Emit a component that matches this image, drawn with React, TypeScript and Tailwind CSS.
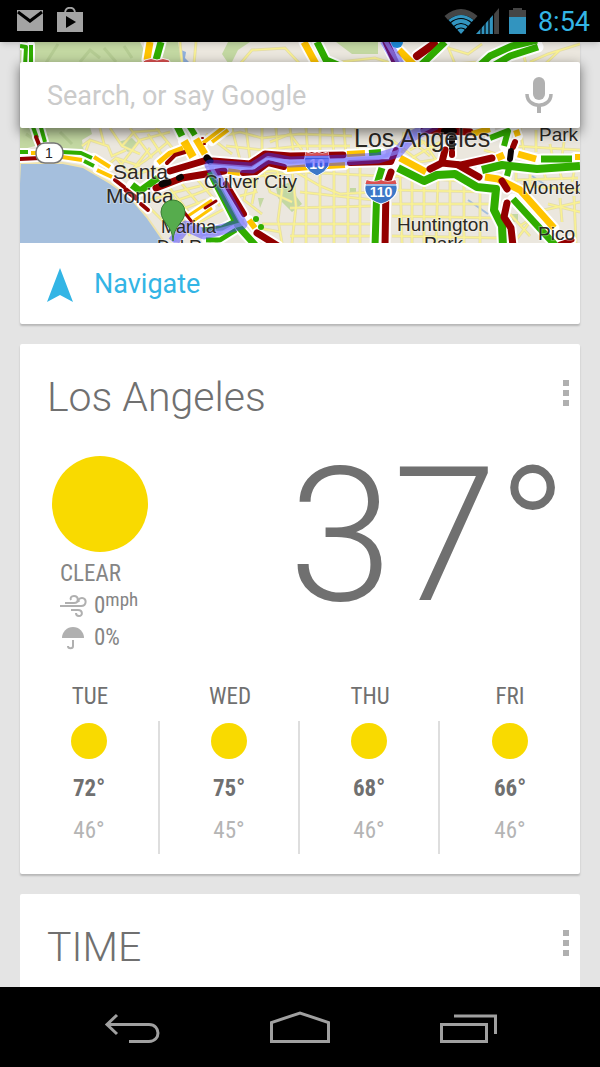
import React from 'react';

interface Road {
  d: string;
  color: string;
  width?: number;
}

interface Forecast {
  day: string;
  high: number;
  low: number;
}

const GREEN = '#30ad00';
const YELLOW = '#ffc400';
const RED = '#930000';
const BLACK = '#0c0404';

const FORECAST: Forecast[] = [
  { day: 'TUE', high: 72, low: 46 },
  { day: 'WED', high: 75, low: 45 },
  { day: 'THU', high: 68, low: 46 },
  { day: 'FRI', high: 66, low: 46 },
];

const STREETS = [
  // top strip
  'M180 42 L182 64 M196 42 L194 64 M240 64 L252 50 L285 48 L300 64 M340 62 L375 58 L400 66',
  'M446 42 L455 64 M448 48 L468 54 L482 44 M455 64 L478 62 M530 62 L548 54 L580 44 M545 64 L560 50 M520 42 L526 64',
  // santa monica
  'M82 146 L90 140 L108 146 L112 156 L126 150 M90 140 L84 156 M100 128 L104 144 M110 128 L122 146 L140 154',
  'M122 146 L134 132 L160 130 M104 168 L116 158 L140 166 M130 128 L152 158 M116 158 L128 172 L146 160 L168 142',
  'M140 140 L170 132 M148 134 L164 158 M136 174 L158 168 M120 166 L140 140 M156 128 L174 150 M126 178 L150 148',
  'M150 200 L176 192 L200 186 M168 186 L190 214 M182 184 L202 208 M196 178 L220 206 M150 208 L172 230',
  'M166 204 L196 194 L222 184 M180 210 L206 200 M200 222 L226 208 M222 200 L238 232 M172 196 L190 236',
  // mid city
  'M214 138 L240 132 L262 138 L300 134 L352 136 M226 146 L262 150 L300 146 L350 146 M206 134 L232 154',
  'M232 128 L240 160 M246 128 L250 160 M262 128 L262 152 M276 128 L278 156 M290 128 L294 156',
  'M306 128 L308 156 M320 128 L320 156 M332 128 L334 156 M344 128 L346 156 M356 128 L358 156',
  'M270 142 L290 134 L302 150 M300 156 L288 170 L262 172 M224 174 L260 176 L300 172 L380 176',
  'M296 172 L320 186 L340 194 L375 192 M276 166 L282 190 L278 220 L282 243 M292 170 L296 206 L292 243 M306 168 L306 243',
  'M320 172 L320 243 M334 166 L334 243 M348 166 L348 243 M360 166 L360 243 M250 172 L244 200 L262 214',
  'M258 172 L252 204 M262 166 L270 192 L292 202 M290 208 L374 206 M262 224 L374 224 M290 236 L374 236',
  'M248 226 L280 232 M300 192 L374 200 M240 196 L256 192 L250 176',
  // south los angeles
  'M394 176 L580 190 M392 190 L492 192 M392 204 L492 204 M392 216 L496 218 M392 236 L500 238',
  'M400 172 L402 243 M412 180 L412 243 M424 186 L424 243 M438 180 L436 243 M450 178 L450 243 M464 184 L464 243 M480 190 L480 243',
  'M392 140 L420 162 L446 158 M410 150 L424 142 L436 160 M404 132 L400 158 M416 144 L430 156 M420 140 L436 150 M412 158 L440 142',
  // east side
  'M520 128 L524 152 M536 130 L536 152 M550 144 L552 154 M564 142 L562 156 M514 146 L580 150 M484 150 L508 158',
  'M516 172 L516 194 M530 172 L530 202 M544 172 L546 180 M560 172 L562 180 M574 172 L572 182 M516 180 L578 178',
  'M520 226 L544 210 L580 202 M510 214 L530 236 M548 204 L580 212 M560 198 L562 222 M516 240 L536 214 M574 196 L576 243',
];

const ROADS: Road[] = [
  // strip above the search box
  { d: 'M20 46 L26 47 L25 66', color: GREEN, width: 4 },
  { d: 'M31 45 L31 66', color: GREEN, width: 4 },
  { d: 'M150 42 L147 60', color: YELLOW, width: 7 },
  { d: 'M161 42 L156 60', color: GREEN, width: 7 },
  { d: 'M304 42 L317 66', color: YELLOW, width: 7 },
  { d: 'M317 42 L326 60 L340 66', color: GREEN, width: 7 },
  { d: 'M386 42 L398 68', color: RED, width: 7 },
  { d: 'M399 50 L417 68', color: YELLOW, width: 7 },
  { d: 'M417 56 L434 44', color: RED, width: 8 },
  { d: 'M420 66 L445 42', color: GREEN, width: 7 },
  { d: 'M479 66 L490 56 L512 46 L537 40', color: GREEN, width: 7 },
  { d: 'M493 66 L510 56 L538 47', color: GREEN, width: 7 },
  // pacific coast highway
  { d: 'M32 124 L37 138', color: GREEN, width: 4 },
  { d: 'M40 124 L45 142', color: GREEN, width: 4 },
  { d: 'M36 137 L40 147', color: RED, width: 4 },
  { d: 'M20 152 L28 152', color: GREEN, width: 4 },
  { d: 'M31 153 L38 153', color: YELLOW, width: 4 },
  { d: 'M20 159 L40 158', color: RED, width: 4 },
  { d: 'M62 152 L81 153 L92 158', color: GREEN, width: 4 },
  { d: 'M62 157 L82 160', color: YELLOW, width: 4 },
  { d: 'M84 161 L94 166', color: GREEN, width: 4 },
  { d: 'M94 157 L110 167', color: YELLOW, width: 4 },
  { d: 'M97 170 L112 177', color: YELLOW, width: 4 },
  { d: 'M115 180 L124 187', color: RED, width: 4 },
  { d: 'M126 190 L136 198', color: RED, width: 5 },
  { d: 'M141 204 L148 210', color: RED, width: 4 },
  // santa monica freeway
  { d: 'M158 163 L170 153 L183 148', color: YELLOW, width: 5 },
  { d: 'M167 163 L175 155 L185 152', color: RED, width: 4 },
  { d: 'M176 124 L182 136', color: GREEN, width: 7 },
  { d: 'M188 124 L195 135', color: GREEN, width: 6 },
  { d: 'M184 141 L193 157', color: YELLOW, width: 8 },
  { d: 'M196 139 L205 154', color: YELLOW, width: 7 },
  { d: 'M203 143 L224 127', color: YELLOW, width: 4 },
  { d: 'M212 142 L228 130', color: YELLOW, width: 4 },
  { d: 'M170 171 L207 160', color: RED, width: 7 },
  { d: 'M156 188 L182 178 L224 171', color: RED, width: 7 },
  { d: 'M132 185 L140 191 L158 178', color: GREEN, width: 7 },
  { d: 'M162 184 L168 182', color: BLACK, width: 7 },
  { d: 'M179 178 L181 177', color: BLACK, width: 6 },
  { d: 'M228 171 L240 173', color: YELLOW, width: 6 },
  { d: 'M213 161 L250 164 L265 154 L290 156 L343 155', color: RED, width: 7 },
  { d: 'M243 173 L256 172 L268 163 L284 167', color: RED, width: 6 },
  { d: 'M287 169 L310 167 L345 165', color: YELLOW, width: 6 },
  { d: 'M347 154 L365 153', color: YELLOW, width: 6 },
  { d: 'M369 153 L381 152', color: GREEN, width: 6 },
  { d: 'M350 163 L391 162 L396 150', color: RED, width: 6 },
  { d: 'M207 158 L210 161', color: BLACK, width: 7 },
  { d: 'M202 138 L203 138 M204 144 L205 144', color: RED, width: 2 },
  // san diego freeway
  { d: 'M210 172 L238 226 L256 246', color: GREEN, width: 7 },
  { d: 'M237 220 L222 228 L202 230', color: GREEN, width: 5 },
  { d: 'M236 230 L220 240 L206 240', color: GREEN, width: 5 },
  { d: 'M226 184 L244 214', color: RED, width: 6 },
  { d: 'M249 220 L255 228', color: YELLOW, width: 6 },
  { d: 'M257 233 L278 246', color: RED, width: 7 },
  { d: 'M188 216 L212 200', color: YELLOW, width: 3 },
  { d: 'M192 222 L212 208', color: YELLOW, width: 3 },
  { d: 'M205 208 L216 201', color: RED, width: 3 },
  { d: 'M184 212 L192 222', color: RED, width: 3 },
  // harbor freeway
  { d: 'M382 168 L377 184 L375 246', color: GREEN, width: 7 },
  { d: 'M391 172 L386 186 L385 246', color: RED, width: 7 },
  // east
  { d: 'M400 158 L426 172', color: YELLOW, width: 7 },
  { d: 'M398 168 L424 181 L437 175 L455 174 L477 187 L496 189 L494 210 L502 226 L503 246', color: GREEN, width: 8 },
  { d: 'M482 170 L502 165 L537 169 L580 166', color: GREEN, width: 8 },
  { d: 'M490 138 L508 131 L504 146', color: GREEN, width: 6 },
  { d: 'M510 164 L507 176', color: GREEN, width: 6 },
  { d: 'M430 169 L442 163 L461 165 L492 158', color: RED, width: 7 },
  { d: 'M445 150 L442 162 M458 165 L479 177', color: RED, width: 7 },
  { d: 'M424 130 L448 131 L470 132', color: RED, width: 7 },
  { d: 'M472 134 L490 129', color: YELLOW, width: 6 },
  { d: 'M444 131 L454 131 M452 138 L452 148', color: BLACK, width: 6 },
  { d: 'M452 152 L452 155', color: RED, width: 6 },
  { d: 'M497 158 L504 155', color: YELLOW, width: 7 },
  { d: 'M518 154 L536 159', color: YELLOW, width: 7 },
  { d: 'M541 159 L572 159', color: GREEN, width: 7 },
  { d: 'M575 157 L582 157', color: YELLOW, width: 6 },
  { d: 'M516 130 L518 136', color: YELLOW, width: 6 },
  { d: 'M515 142 L513 147', color: RED, width: 6 },
  { d: 'M511 151 L510 159', color: BLACK, width: 6 },
  { d: 'M485 177 L498 179 L520 190 L554 228', color: YELLOW, width: 7 },
  { d: 'M513 199 L556 246', color: GREEN, width: 7 },
  { d: 'M502 181 L507 189', color: RED, width: 7 },
  { d: 'M507 203 L504 217 L511 228 L513 246', color: RED, width: 7 },
  { d: 'M560 244 L572 240', color: RED, width: 5 },
];

const ROUTE =
  'M385 40 L400 66 M436 124 L412 136 L398 152 L378 158 L345 160 L290 162 L268 158 L252 168 L210 165 L242 224 L220 230 L204 234 L186 226 L173 242';

const StatusBar: React.FC = () => (
  <header className="relative z-20 flex h-[42px] shrink-0 items-center justify-between bg-black pr-[10px] pl-4 shadow-md">
    <div className="flex items-center gap-3">
      <svg width="28" height="28" viewBox="0 0 28 28" aria-label="New mail">
        <path d="M1 3h26v21H1z" fill="#a3a3a3" />
        <path d="M2 5l12 9 12-9" fill="none" stroke="#000" strokeWidth="3" />
      </svg>
      <svg width="28" height="28" viewBox="0 0 28 28" aria-label="Play store">
        <path d="M1 5h26v20H1z" fill="#a3a3a3" />
        <path d="M9 6c0-7 10-7 10 0" fill="none" stroke="#a3a3a3" strokeWidth="2" />
        <path d="M10 9v12l10-6z" fill="#000" />
      </svg>
    </div>
    <div className="flex items-center">
      <svg width="84" height="28" viewBox="445 7 84 28" aria-label="Wi-Fi, signal and battery">
        <path d="M445.500 16 Q462 2 478.500 16 L475 20 Q462 10 449 20 Z" fill="#454545" />
        <path d="M449.500 20 Q462 10 474.500 20 L462 34 Z" fill="#3294bf" />
        <path
          d="M451 23 Q462 14 473 23 M454 27 Q462 20 470 27 M457 30 Q462 26 467 30"
          fill="none"
          stroke="#000"
          strokeWidth="1.200"
        />
        <path d="M477 34 L494 15 L494 34 Z" fill="#3294bf" />
        <path d="M495 14 L500 8 L500 34 L495 34 Z" fill="#454545" />
        <path d="M482 24v10 M486 20v14 M490 16v18 M494.500 12v22" stroke="#000" strokeWidth="1.200" />
        <path d="M510 17 V10 H514 V8 H523 V10 H527 V17 Z" fill="#454545" />
        <path d="M510 17 H527 V34 H510 Z" fill="#3294bf" />
      </svg>
      <time className="ml-2.5 pt-0.5 text-[27px] leading-8 text-[#33b5e5]">8:54</time>
    </div>
  </header>
);

const Interstate: React.FC<{ x: number; y: number; label: string; wide?: boolean }> = ({ x, y, label, wide }) => (
  <g transform={`translate(${x} ${y})`}>
    <g transform={wide ? 'scale(1.3 1)' : undefined}>
      <path d="M-11 -11 Q-5 -8 0 -11 Q5 -8 11 -11 Q17 6 0 13 Q-17 6 -11 -11Z" fill="#3c78c8" stroke="#fff" />
      <path d="M-11 -11 Q-5 -8 0 -11 Q5 -8 11 -11 L12 -7 H-12Z" fill="#d95050" />
      <path d="M-12 -6H12" stroke="#fff" />
    </g>
    <text y="6" textAnchor="middle" fontSize="14" fontWeight="700" fill="#fff">
      {label}
    </text>
  </g>
);

const TrafficMap: React.FC = () => (
  <svg
    className="block aspect-[560/201] w-full"
    viewBox="20 42 560 201"
    preserveAspectRatio="xMidYMid slice"
    fontFamily="'Liberation Sans', sans-serif"
    role="img"
    aria-label="Traffic map of Los Angeles"
  >
    <rect x="20" y="42" width="560" height="201" fill="#ebe7de" />
    {/* parks and hills */}
    <g fill="#c3d8a2">
      <path d="M20 42 H140 L146 54 L166 66 V84 H20Z" />
      <path d="M20 120 H88 L92 134 L82 140 L84 152 L60 150 L50 142 L20 150Z" />
      <path d="M160 42 H178 L182 64 H158Z M228 42 H250 L238 50 L230 66 L222 54Z M336 42 H378 V54 H352Z" />
      <path d="M276 188 L290 182 L296 196 L302 204 L292 212 L278 198Z M258 198 L264 198 L260 208Z" />
      <path d="M118 142 L132 138 L138 144 L128 152Z M512 214 h6 v8 h-6Z M350 188 h6 v6 h-6Z" />
    </g>
    <path
      d="M44 66 L58 44 M80 62 L90 50 L100 58 M104 48 L116 62 M124 46 L132 58 M26 134 L40 144 L48 134 M60 132 L72 144"
      stroke="#b5cc93"
      strokeWidth="3"
      fill="none"
    />
    <path d="M181 50 L186 52 L185 58 L189 62 L185 66 L180 64Z" fill="#8fb0dc" />
    <path d="M468 200 L488 214 M532 176 L544 184" stroke="#a5bfdd" strokeWidth="2" />

    {STREETS.map(d => (
      <path key={d} d={d} fill="none" stroke="#e3dcaa" strokeWidth="3" />
    ))}
    {STREETS.map(d => (
      <path key={d} d={d} fill="none" stroke="#faf291" strokeWidth="1.500" />
    ))}

    {/* ocean */}
    <path
      d="M20 163 L63 163 L83 167 L110 183 L130 197 L147 217 L163 240 L166 246 H16Z"
      fill="#a5bfdd"
      stroke="#efe3ae"
      strokeWidth="2"
    />

    {/* traffic, white casing first */}
    <g fill="none" strokeLinejoin="round">
      {ROADS.map(r => (
        <path key={r.d} d={r.d} stroke="#fff" strokeWidth={(r.width ?? 6) + 4} strokeLinecap="round" />
      ))}
      {ROADS.map(r => (
        <path
          key={r.d}
          d={r.d}
          stroke={r.color}
          strokeWidth={r.width ?? 6}
          strokeLinecap={r.color === RED || r.color === BLACK ? 'round' : 'butt'}
        />
      ))}
      <circle cx="256" cy="219" r="3" fill={GREEN} />
      <circle cx="261" cy="227" r="3" fill={GREEN} />
    </g>

    <Interstate x={317} y={163} label="10" />

    {/* planned route */}
    <g fill="none" strokeLinejoin="round">
      <path d={ROUTE} stroke="#3a30ff" strokeOpacity="0.45" strokeWidth="11" />
      <path d={ROUTE} stroke="#8c8cff" strokeOpacity="0.65" strokeWidth="4" />
    </g>
    <circle cx="397" cy="42" r="6" fill="#1e8ad8" />

    <path d="M142 66 Q142 61 145 60 Q151 57 157 60 Q163 57 169 60 L172 66Z" fill="#d95050" stroke="#fff" />
    <rect x="36" y="143" width="27" height="20" rx="9" fill="#fff" stroke="#777" strokeWidth="1.500" />
    <text x="49" y="158" fontSize="14" textAnchor="middle" fill="#222">1</text>
    <Interstate x={381} y={191} label="110" wide />

    <g fill="#2b2824" stroke="#fff" strokeOpacity="0.3" strokeWidth="2" paintOrder="stroke" fontSize="18">
      <text x="113" y="179" fontSize="21">Santa</text>
      <text x="106" y="203" fontSize="21">Monica</text>
      <text x="204" y="188" fontSize="19">Culver City</text>
      <text x="354" y="147" fontSize="25">Los Angeles</text>
      <text x="539" y="141" fontSize="19">Park</text>
      <text x="522" y="194" fontSize="19">Monteb</text>
      <text x="397" y="231" fontSize="19">Huntington</text>
      <text x="424" y="250" fontSize="19">Park</text>
      <text x="538" y="240" fontSize="19">Pico</text>
      <text x="161" y="233">Marina</text>
      <text x="157" y="253">Del Rey</text>
    </g>

    {/* destination pin */}
    <path
      d="M173 241 C173 226 161 222 161 212 A12 12 0 0 1 185 212 C185 222 173 226 173 241Z"
      fill="#56ac4d"
      stroke="#3a7f33"
    />
  </svg>
);

const SearchBox: React.FC = () => (
  <form className="absolute inset-x-5 top-5 z-10 flex h-[66px] items-center rounded-xs bg-white pt-0.5 pr-6 pl-[27px] shadow-[0_4px_12px_1px_rgba(0,0,0,0.45)]">
    <input
      type="text"
      aria-label="Search"
      placeholder="Search, or say Google"
      className="min-w-0 flex-1 bg-transparent text-[27px] text-[#6e6e6e] outline-none placeholder:text-[#cbcbcb]"
    />
    <button type="button" aria-label="Voice search">
      <svg width="34" height="40" viewBox="0 0 34 40">
        <rect x="11" y="1" width="12" height="23" rx="6" fill="#b1b1b1" />
        <path d="M5 18 C5 33 29 33 29 18" fill="none" stroke="#b1b1b1" strokeWidth="3.500" />
        <path d="M17 29v8" stroke="#b1b1b1" strokeWidth="4" />
      </svg>
    </button>
  </form>
);

const CardHeader: React.FC<{ title: string }> = ({ title }) => (
  <div className="flex items-start justify-between pt-7 pr-2 pl-[27px]">
    <h2 className="text-[41px] leading-[50px] font-light text-[#707070]">{title}</h2>
    <button type="button" aria-label={`${title} options`} className="flex flex-col gap-1 px-[3px] pt-2">
      <span className="size-1.5 bg-[#b0b0b0]" />
      <span className="size-1.5 bg-[#b0b0b0]" />
      <span className="size-1.5 bg-[#b0b0b0]" />
    </button>
  </div>
);

const WeatherCard: React.FC = () => (
  <section className="rounded-xs bg-white pb-5 shadow-[0_2px_2px_rgba(0,0,0,0.2)]">
    <CardHeader title="Los Angeles" />
    <div className="flex justify-between pr-3 pl-8">
      <div className="pt-[34px] font-['Roboto_Condensed',Roboto,sans-serif] text-[23px] leading-8 text-[#858585]">
        <div className="mb-1.5 size-24 rounded-full bg-[#f9da00]" />
        <div className="pl-2">
          <p>CLEAR</p>
          <p className="flex items-center gap-1.5">
            <svg width="28" height="24" viewBox="0 0 28 24" fill="none" stroke="#b0b0b0" strokeWidth="2">
              <path d="M0 12h21c6 0 6-8 1-8-3 0-4 2-3 4M5 9h9c5 0 5-7 0-7-3 0-4 2-3 4M11 16h7c5 0 5 6 1 6-2 0-3-1-3-3" />
            </svg>
            <span className="flex">
              0<span className="-mt-1.5 text-[19px] leading-8">mph</span>
            </span>
          </p>
          <p className="flex items-center gap-1.5">
            <svg width="28" height="24" viewBox="0 0 28 24">
              <path d="M2 12a11 11 0 0 1 22 0z" fill="#b0b0b0" />
              <path d="M13 14v6c0 3-5 3-5 0" fill="none" stroke="#b0b0b0" strokeWidth="2" />
            </svg>
            <span>0%</span>
          </p>
        </div>
      </div>
      <p className="pt-1 text-[188px] leading-[220px] font-light text-[#707070]">37°</p>
    </div>
    <ul className="grid grid-cols-4 pt-[27px] text-center font-['Roboto_Condensed',Roboto,sans-serif] text-[23px] leading-8 text-[#707070]">
      {FORECAST.map((f, i) => (
        <li key={f.day}>
          <p>{f.day}</p>
          <div className={`mt-2 flex h-[133px] flex-col items-center ${i < 3 ? 'border-r-2 border-[#dedede]' : ''}`}>
            <span className="mt-0.5 size-9 rounded-full bg-[#f9da00]" />
            <span className="mt-3.5 font-bold">{f.high}°</span>
            <span className="mt-2.5 text-[#b5b5b5]">{f.low}°</span>
          </div>
        </li>
      ))}
    </ul>
  </section>
);

const NavBar: React.FC = () => (
  <nav className="flex h-20 shrink-0 justify-center bg-black pt-0.5">
    <button type="button" aria-label="Back" className="flex w-[28%] items-center justify-center">
      <svg width="56" height="36" viewBox="0 0 56 36" fill="none" stroke="#a0a0a0" strokeWidth="3">
        <path d="M13 5L3 14.500l10 9.500M4 14.500h41c12 0 12 17 0 17H25" />
      </svg>
    </button>
    <button type="button" aria-label="Home" className="flex w-[28%] items-center justify-center">
      <svg width="60" height="36" viewBox="0 0 60 36" fill="none" stroke="#a0a0a0" strokeWidth="3">
        <path d="M1.500 31.500v-19L30 3l28.500 9.500v19z" />
      </svg>
    </button>
    <button type="button" aria-label="Recent apps" className="flex w-[28%] items-center justify-center">
      <svg width="58" height="36" viewBox="0 0 58 36" fill="none" stroke="#a0a0a0" strokeWidth="3">
        <path d="M2.500 14.500h45v17h-45zM15 6h41.500v18" />
      </svg>
    </button>
  </nav>
);

export default function App() {
  return (
    <div className="flex h-screen flex-col bg-[#e4e4e4] font-[Roboto,sans-serif]">
      <StatusBar />
      <main className="relative min-h-0 flex-1 overflow-hidden">
        <SearchBox />
        <div className="flex flex-col gap-5 px-5">
          <section className="rounded-b-xs bg-white shadow-[0_2px_2px_rgba(0,0,0,0.2)]">
            <TrafficMap />
            <a href="#navigate" className="flex h-[81px] items-center gap-5 pt-0.5 pl-[27px] text-[27px] text-[#33b5e5]">
              <svg width="27" height="36" viewBox="0 0 27 36">
                <path d="M13 1L26 35l-13-7L0 35z" fill="#33b5e5" />
              </svg>
              Navigate
            </a>
          </section>
          <WeatherCard />
          <section className="h-40 rounded-xs bg-white">
            <CardHeader title="TIME" />
          </section>
        </div>
      </main>
      <NavBar />
    </div>
  );
}
